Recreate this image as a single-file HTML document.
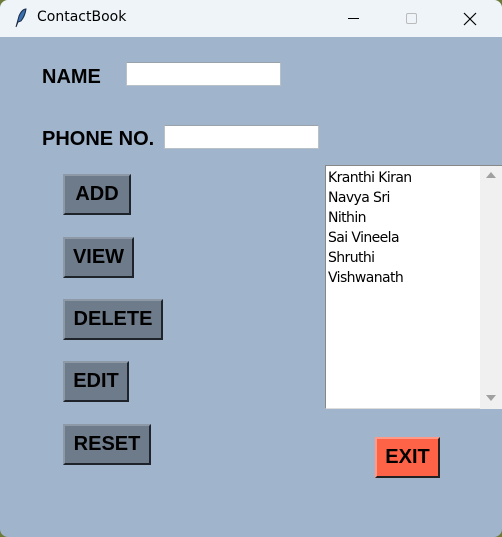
<!DOCTYPE html>
<html><head><meta charset="utf-8"><style>
*{margin:0;padding:0;box-sizing:border-box}
html,body{width:502px;height:537px;overflow:hidden;background:#6d7a3a}
.win{position:absolute;left:0;top:0;width:502px;height:537px;background:#a0b4cb;border-radius:8px 8px 8px 8px;overflow:hidden}
.title{position:absolute;left:0;top:0;width:502px;height:37px;background:#eef4f8}
.title .t{position:absolute;left:37px;top:9px;font:14px "DejaVu Sans","Liberation Sans",sans-serif;color:#000}
.lbl{position:absolute;font:bold 20px "Liberation Sans",sans-serif;color:#000}
.ent{position:absolute;background:#fff;border:1px solid #b8c0c8;border-top-color:#9aa2aa}
.btn{position:absolute;background:#6e7b8b;border:2px solid;border-color:#8d99a7 #1e242a #1e242a #8d99a7;font:bold 20px "Liberation Sans",sans-serif;color:#000;text-align:center;line-height:37px}
.list{position:absolute;left:325px;top:165px;width:177px;height:244px;background:#fff;border:1px solid #888;border-right:none;border-bottom:1px solid #ddd;padding-top:2px}
.list div{font:14px "DejaVu Sans","Liberation Sans",sans-serif;color:#000;height:20px;line-height:20px;padding-left:2px;letter-spacing:-0.6px}
.sb{position:absolute;left:480px;top:166px;width:22px;height:243px;background:#f0f0f0}
</style></head><body>
<div class="win">
<div class="title">
<svg style="position:absolute;left:13px;top:8px" width="14" height="20" viewBox="0 0 14 20"><path d="M3 19 L6 8 Q9 1 13 1 Q12 8 8 13 L5 14 Z" fill="#3a6fb0" stroke="#1b2a44" stroke-width="1"/></svg>
<div class="t">ContactBook</div>
<div style="position:absolute;left:348px;top:18px;width:11px;height:1px;background:#000"></div>
<div style="position:absolute;left:406px;top:13px;width:11px;height:11px;border:1px solid #bbb;border-radius:2px"></div>
<svg style="position:absolute;left:463px;top:12px" width="14" height="14" viewBox="0 0 14 14"><path d="M1 1L13 13M13 1L1 13" stroke="#000" stroke-width="1.2"/></svg>
</div>
<div class="lbl" style="left:42px;top:66px">NAME</div>
<div class="ent" style="left:126px;top:62px;width:155px;height:24px"></div>
<div class="lbl" style="left:42px;top:128px">PHONE NO.</div>
<div class="ent" style="left:164px;top:125px;width:155px;height:24px"></div>
<div class="btn" style="left:63px;top:174px;width:68px;height:41px">ADD</div>
<div class="btn" style="left:63px;top:237px;width:71px;height:41px">VIEW</div>
<div class="btn" style="left:63px;top:299px;width:100px;height:41px">DELETE</div>
<div class="btn" style="left:63px;top:361px;width:66px;height:41px">EDIT</div>
<div class="btn" style="left:63px;top:424px;width:88px;height:41px">RESET</div>
<div class="btn" style="left:375px;top:437px;width:65px;height:41px;background:#ff6347;border-color:#ff9a88 #222 #222 #ff9a88">EXIT</div>
<div class="list">
<div>Kranthi Kiran</div><div>Navya Sri</div><div>Nithin</div><div>Sai Vineela</div><div>Shruthi</div><div>Vishwanath</div>
</div>
<div class="sb">
<svg style="position:absolute;left:6px;top:5px" width="10" height="7"><path d="M0 7L5 1L10 7Z" fill="#a0a0a0"/></svg>
<svg style="position:absolute;left:6px;top:229px" width="10" height="7"><path d="M0 0L5 6L10 0Z" fill="#a0a0a0"/></svg>
</div>
</div>
</body></html>
